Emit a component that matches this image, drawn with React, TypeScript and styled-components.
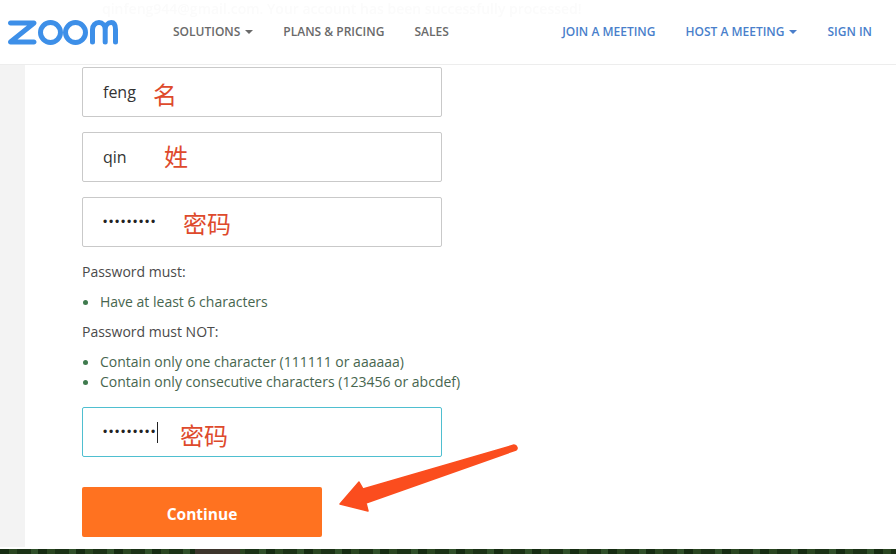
import React from "react";
import styled, { createGlobalStyle } from "styled-components";

const Global = createGlobalStyle`
  html, body { margin: 0; padding: 0; background: #fff; }
  body { font-family: "Open Sans", "Liberation Sans", sans-serif; -webkit-font-smoothing: antialiased; }
  #root { width: 896px; height: 554px; overflow: hidden; }
`;

const Page = styled.div`
  position: relative;
  width: 896px;
  height: 554px;
  display: flex;
  flex-direction: column;
  overflow: hidden;
`;

const Header = styled.header`
  position: relative;
  flex: 0 0 65px;
  box-sizing: border-box;
  height: 65px;
  display: flex;
  align-items: center;
  padding: 0 24px 0 8px;
  background: #fff;
  border-bottom: 1px solid #ededed;
`;

const GhostText = styled.div`
  position: absolute;
  left: 102px;
  top: 1px;
  font-size: 14px;
  font-weight: 600;
  line-height: 16px;
  color: #fbfbfb;
  white-space: nowrap;
  filter: blur(0.7px);
`;

const Logo = styled.svg`
  position: relative;
  flex: none;
  width: 110px;
  height: 26px;
  color: #3d8fe8;
`;

const NavGroup = styled.nav<{ $push?: boolean }>`
  position: relative;
  display: flex;
  align-items: center;
  gap: 30px;
  margin-left: ${(p) => (p.$push ? "auto" : "55px")};
`;

const NavLink = styled.a<{ $blue?: boolean }>`
  display: inline-flex;
  align-items: center;
  gap: 5px;
  font-size: 12px;
  font-weight: 600;
  line-height: 16px;
  white-space: nowrap;
  color: ${(p) => (p.$blue ? "#4a7fcb" : "#6a6a6a")};
`;

const Caret = styled.i`
  display: block;
  width: 0;
  height: 0;
  border-left: 4px solid transparent;
  border-right: 4px solid transparent;
  border-top: 4px solid currentColor;
`;

const Body = styled.div`
  flex: 1;
  display: flex;
  min-height: 0;
`;

const Gutter = styled.div`
  flex: 0 0 25px;
  background: #f3f3f3;
  margin-bottom: 2px;
`;

const Main = styled.main`
  flex: 1;
  box-sizing: border-box;
  padding: 2px 0 0 57px;
  display: flex;
  flex-direction: column;
  align-items: flex-start;
`;

const Field = styled.div<{ $focus?: boolean }>`
  position: relative;
  box-sizing: border-box;
  flex: none;
  width: 360px;
  height: 50px;
  margin-bottom: 15px;
  padding-left: 20px;
  display: flex;
  align-items: center;
  background: #fff;
  border-radius: 2px;
  border: 1px solid ${(p) => (p.$focus ? "#4fbfd0" : "#c9c9c9")};
  color: #333;
  font-size: 16px;
`;

const Dots = styled.span`
  font-family: "Liberation Sans", sans-serif;
  font-size: 12px;
  letter-spacing: 1.8px;
  color: #222;
`;

const Cursor = styled.i`
  display: block;
  width: 1px;
  height: 21px;
  background: #222;
`;

const Note = styled.span<{ $left: number; $top: number }>`
  position: absolute;
  left: ${(p) => p.$left}px;
  top: ${(p) => p.$top}px;
  font-family: "Noto Sans CJK SC", sans-serif;
  font-size: 24px;
  line-height: 30px;
  color: #de4a2c;
  white-space: nowrap;
`;

const Rule = styled.p`
  margin: 0;
  font-size: 14px;
  line-height: 20px;
  color: #4a4a4a;
`;

const Bullets = styled.ul<{ $gap: number }>`
  margin: 0;
  padding: 0;
  list-style: none;
  margin-top: 10px;
  margin-bottom: ${(p) => p.$gap}px;
`;

const Bullet = styled.li`
  display: flex;
  align-items: center;
  gap: 12px;
  font-size: 14px;
  line-height: 20px;
  white-space: nowrap;
  color: #47664f;
  &::before {
    content: "";
    width: 5px;
    height: 5px;
    margin-left: 1px;
    border-radius: 50%;
    background: #3f7a4e;
  }
`;

const Submit = styled.button`
  flex: none;
  width: 240px;
  height: 50px;
  margin-top: 15px;
  padding: 4px 0 0;
  border: 0;
  border-radius: 2px;
  background: #ff7220;
  color: #fff;
  font-family: inherit;
  font-size: 15.5px;
  font-weight: 700;
`;

const Arrow = styled.svg`
  position: absolute;
  left: 330px;
  top: 435px;
  width: 200px;
  height: 85px;
`;

const PhotoStrip = styled.div`
  flex: 0 0 5px;
  background:
    linear-gradient(90deg, transparent 195px, #3d352c 195px, #3d352c 240px, transparent 240px),
    repeating-linear-gradient(90deg, #162c12 0 9px, #2a4621 9px 17px, #1b3216 17px 31px, #30502a 31px 38px);
`;

export default function App() {
  return (
    <Page>
      <Global />
      <Header>
        <GhostText>qinfeng944@gmail.com. Your account has been successfully processed!</GhostText>
        <Logo viewBox="0 0 110 26" aria-label="zoom">
          <path fill="currentColor" d="M2.5 1.5H26c1.4 0 2.5 1.1 2.5 2.5 0 .8-.3 1.5-.9 2L9.5 20.5H26c1.4 0 2.5 1.1 2.5 2.5S27.400 25.500 26 25.500H2.500C1.100 25.500 0 24.400 0 23c0-.8.3-1.500.9-2L19 6.500H2.500C1.100 6.500 0 5.400 0 4s1.100-2.500 2.500-2.500z" />
          <circle cx="42.500" cy="13.500" r="10" fill="none" stroke="currentColor" strokeWidth="5" />
          <circle cx="67.500" cy="13.500" r="10" fill="none" stroke="currentColor" strokeWidth="5" />
          <path fill="none" stroke="currentColor" strokeWidth="5" strokeLinecap="round" d="M84.500 23V10.500C84.500 6.600 87.400 3.500 91 3.500s6.200 3.100 6.200 7V23M97.200 10.500C97.200 6.600 99.900 3.500 103.300 3.500s4.200 3.100 4.200 7V23" />
        </Logo>
        <NavGroup>
          <NavLink>SOLUTIONS <Caret /></NavLink>
          <NavLink>PLANS &amp; PRICING</NavLink>
          <NavLink>SALES</NavLink>
        </NavGroup>
        <NavGroup $push>
          <NavLink $blue>JOIN A MEETING</NavLink>
          <NavLink $blue>HOST A MEETING <Caret /></NavLink>
          <NavLink $blue>SIGN IN</NavLink>
        </NavGroup>
      </Header>
      <Body>
        <Gutter />
        <Main>
          <Field>feng<Note $left={70} $top={11}>名</Note></Field>
          <Field>qin<Note $left={81} $top={8}>姓</Note></Field>
          <Field><Dots>•••••••••</Dots><Note $left={100} $top={10}>密码</Note></Field>
          <Rule>Password must:</Rule>
          <Bullets $gap={10}><Bullet>Have at least 6 characters</Bullet></Bullets>
          <Rule>Password must NOT:</Rule>
          <Bullets $gap={15}>
            <Bullet>Contain only one character (111111 or aaaaaa)</Bullet>
            <Bullet>Contain only consecutive characters (123456 or abcdef)</Bullet>
          </Bullets>
          <Field $focus><Dots>•••••••••</Dots><Cursor /><Note $left={97} $top={12}>密码</Note></Field>
          <Submit>Continue</Submit>
        </Main>
      </Body>
      <PhotoStrip />
      <Arrow viewBox="0 0 200 85">
        <path fill="#fb4d1e" stroke="#fb4d1e" strokeWidth="1.5" strokeLinejoin="round" d="M10 69 L29 47 L33 54 L184 10 C187 10 188 14 186 15 L36 68 L38 76 Z" />
      </Arrow>
    </Page>
  );
}
